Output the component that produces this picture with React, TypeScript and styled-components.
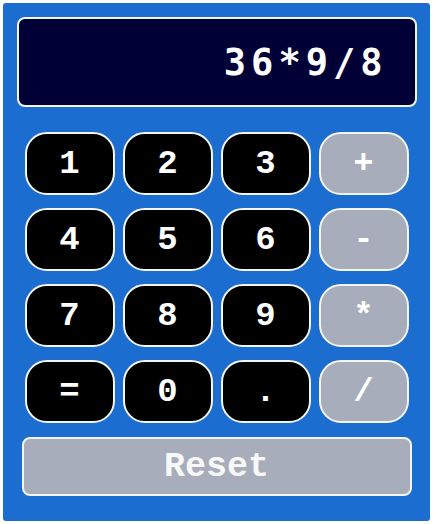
import React, { useState } from 'react';
import styled, { createGlobalStyle } from 'styled-components';

const GlobalStyle = createGlobalStyle`
  html, body {
    margin: 0;
    padding: 0;
    background: #ffffff;
  }
  * {
    box-sizing: border-box;
  }
`;

const Page = styled.div`
  padding: 3px;
`;

const Calculator = styled.div`
  width: 427px;
  height: 518px;
  background: #1b6ecf;
  border-radius: 3px;
  padding: 14px 0 0 0;
  display: flex;
  flex-direction: column;
  align-items: center;
`;

const Screen = styled.div`
  width: 400px;
  height: 90px;
  background: #000036;
  border: 2px solid #f4f4f4;
  border-radius: 8px;
  display: flex;
  align-items: center;
  justify-content: flex-end;
  padding-right: 27px;
  color: #ffffff;
  font-family: 'DejaVu Sans Mono', monospace;
  font-weight: bold;
  font-size: 37px;
  letter-spacing: 5px;
`;

const Keys = styled.div`
  margin-top: 25px;
  display: grid;
  grid-template-columns: repeat(4, 90px);
  grid-auto-rows: 63px;
  column-gap: 8px;
  row-gap: 13px;
`;

const Key = styled.button<{ $op?: boolean }>`
  border: 2px solid #f4f4f4;
  border-radius: 22px;
  background: ${(p) => (p.$op ? '#a7adba' : '#000000')};
  color: #ffffff;
  font-family: 'Liberation Mono', 'Courier New', monospace;
  font-weight: bold;
  font-size: 34px;
  padding: 0;
  cursor: pointer;
`;

const ResetKey = styled.button`
  margin-top: 14px;
  width: 390px;
  height: 59px;
  border: 2px solid #f4f4f4;
  border-radius: 8px;
  background: #a7adba;
  color: #f8f8f8;
  font-family: 'Liberation Mono', 'Courier New', monospace;
  font-weight: bold;
  font-size: 35px;
  padding: 0;
  cursor: pointer;
`;

const keys = [
  { label: '1' }, { label: '2' }, { label: '3' }, { label: '+', op: true },
  { label: '4' }, { label: '5' }, { label: '6' }, { label: '-', op: true },
  { label: '7' }, { label: '8' }, { label: '9' }, { label: '*', op: true },
  { label: '=' }, { label: '0' }, { label: '.' }, { label: '/', op: true },
];

function App() {
  const [expr, setExpr] = useState('36*9/8');

  const press = (label: string) => {
    if (label === '=') {
      try {
        // eslint-disable-next-line no-new-func
        setExpr(String(Function('return (' + expr + ')')()));
      } catch (e) {
        setExpr('Error');
      }
      return;
    }
    setExpr(expr + label);
  };

  return (
    <Page>
      <GlobalStyle />
      <Calculator>
        <Screen>{expr}</Screen>
        <Keys>
          {keys.map((k) => (
            <Key key={k.label} $op={k.op} onClick={() => press(k.label)}>
              {k.label}
            </Key>
          ))}
        </Keys>
        <ResetKey onClick={() => setExpr('')}>Reset</ResetKey>
      </Calculator>
    </Page>
  );
}

export default App;
